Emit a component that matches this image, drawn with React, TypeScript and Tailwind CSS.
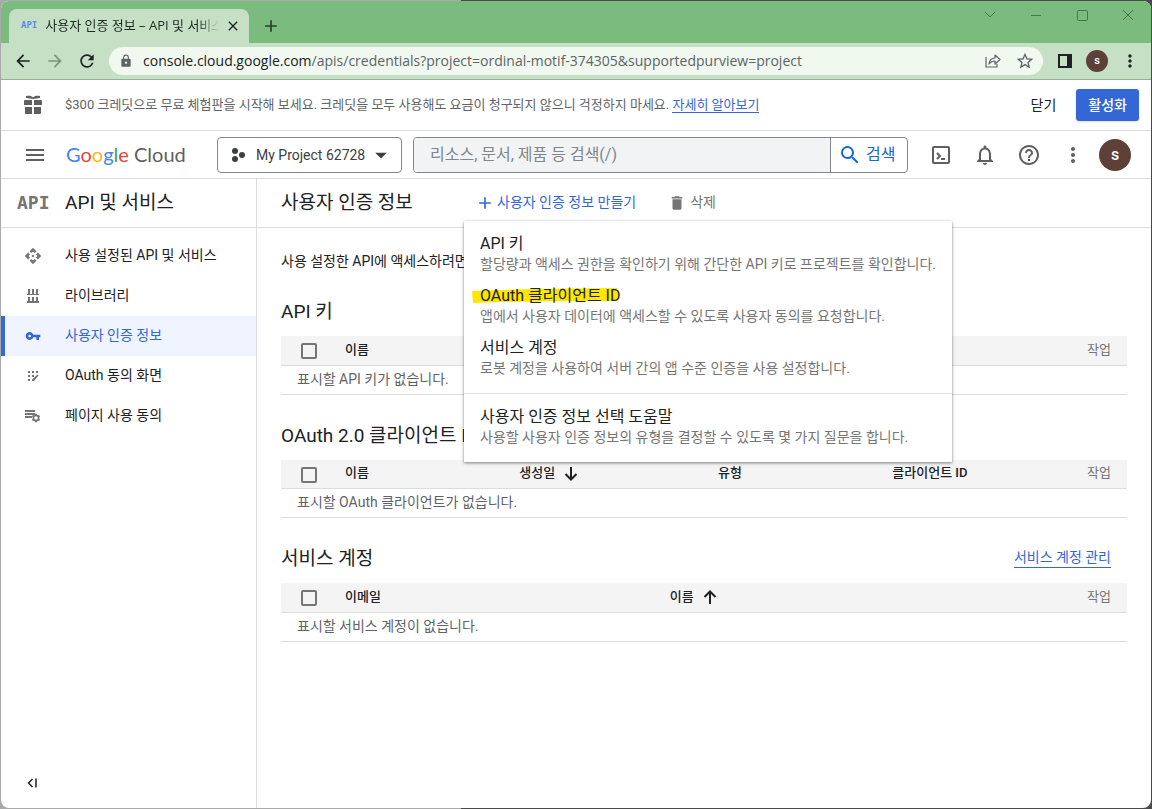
import { useState } from 'react';
import type { ReactNode } from 'react';
import {
  MdAdd,
  MdApi,
  MdArrowBack,
  MdArrowDropDown,
  MdArrowForward,
  MdClose,
  MdDelete,
  MdHelpOutline,
  MdLock,
  MdMenu,
  MdMoreVert,
  MdNotificationsNone,
  MdRefresh,
  MdSearch,
  MdStarBorder,
  MdVpnKey,
} from 'react-icons/md';

const menuItems = [
  { title: 'API 키', description: '할당량과 액세스 권한을 확인하기 위해 간단한 API 키로 프로젝트를 확인합니다.' },
  {
    title: 'OAuth 클라이언트 ID',
    description: '앱에서 사용자 데이터에 액세스할 수 있도록 사용자 동의를 요청합니다.',
    highlighted: true,
  },
  { title: '서비스 계정', description: '로봇 계정을 사용하여 서버 간의 앱 수준 인증을 사용 설정합니다.' },
];

const helpItem = {
  title: '사용자 인증 정보 선택 도움말',
  description: '사용할 사용자 인증 정보의 유형을 결정할 수 있도록 몇 가지 질문을 합니다.',
};

const navItems = [
  { label: '사용 설정된 API 및 서비스', icon: <MdApi className="size-[18px]" /> },
  { label: '라이브러리', icon: <LibraryIcon /> },
  { label: '사용자 인증 정보', icon: <MdVpnKey className="size-4" />, active: true },
  { label: 'OAuth 동의 화면', icon: <ConsentIcon /> },
  { label: '페이지 사용 동의', icon: <AgreementIcon /> },
];

const windowControls = [
  { label: '탭 검색', path: 'M6 8l5 5 5-5' },
  { label: '최소화', path: 'M6 11.5h10' },
  { label: '최대화', path: 'M7.5 6.5h8a1 1 0 0 1 1 1v8a1 1 0 0 1-1 1h-8a1 1 0 0 1-1-1v-8a1 1 0 0 1 1-1z' },
  { label: '창 닫기', path: 'M6 6l10 10M16 6L6 16' },
];

function LibraryIcon() {
  return (
    <svg viewBox="0 0 14 16" className="h-4 w-3.5" fill="currentColor">
      <path d="M2 1h2v5h2V1h2v5h2V1h2v5h1v1H1V6h1zM2 9h2v4h2V9h2v4h2V9h2v4h1v2H1v-2h1z" />
    </svg>
  );
}

function ConsentIcon() {
  return (
    <svg viewBox="0 0 12 12" className="size-3" fill="currentColor">
      <path d="M1 1h2v2H1zM5 1h2v2H5zM9 1h2v2H9zM1 5h2v2H1zM5 5h2v2H5zM1 9h2v2H1z" />
      <path d="M5 9.5l5.5-5 1 1L7 11H5z" />
    </svg>
  );
}

function AgreementIcon() {
  return (
    <svg viewBox="0 0 16 14" className="h-3.5 w-4" fill="currentColor">
      <path d="M0 1h10v2H0zM0 4h10v2H0zM0 7h7v2H0z" />
      <circle cx="11" cy="9" r="2.6" fill="none" stroke="currentColor" strokeWidth="1.6" />
      <path d="M10 4.8h2v1.6h-2zM10 11.6h2v1.6h-2zM6.9 7.6l.9-1.6 1.4.8-.9 1.5zM14.2 6l.9 1.6-1.4.8-.9-1.6zM6.9 10.4l1.4-.8.9 1.6-1.4.8zM15.1 10.4l-.9 1.6-1.4-.8.9-1.6z" />
    </svg>
  );
}

function SortArrow({ up }: { up?: boolean }) {
  return (
    <svg viewBox="0 0 18 18" className="size-[18px]" fill="none" stroke="currentColor" strokeWidth="2">
      <path d={up ? 'M9 16V4M3.500 9L9 3.500 14.500 9' : 'M9 2v12M3.500 9L9 14.500 14.500 9'} />
    </svg>
  );
}

function BrowserChrome() {
  return (
    <div className="font-['Open_Sans','Noto_Sans_CJK_KR',sans-serif]">
      <div className="flex h-[42px] items-start justify-between bg-[#7bbb7e]">
        <div className="flex items-center pt-2 pl-2">
          <div className="flex h-[34px] w-60 items-center rounded-t-lg bg-[#c5e0c5] pr-2 pl-3">
            <span className="font-['DejaVu_Sans_Mono',monospace] text-[9px] font-bold text-[#5f8ae8]">API</span>
            <span className="ml-2 flex-1 overflow-hidden [mask-image:linear-gradient(to_right,black_88%,transparent)] text-[13px] whitespace-nowrap text-[#1f2a20]">
              사용자 인증 정보 – API 및 서비스
            </span>
            <button aria-label="탭 닫기" className="ml-1.5">
              <MdClose className="size-4 text-[#202124]" />
            </button>
          </div>
          <button aria-label="새 탭" className="ml-3">
            <MdAdd className="size-5 text-[#26402a]" />
          </button>
        </div>
        <div className="flex items-center gap-6 pt-[3px] pr-3 text-[#4c724d]">
          {windowControls.map((control) => (
            <button key={control.label} aria-label={control.label}>
              <svg viewBox="0 0 22 22" className="size-[22px]" fill="none" stroke="currentColor">
                <path d={control.path} />
              </svg>
            </button>
          ))}
        </div>
      </div>

      <div className="flex h-[37px] items-center border-b border-[#94b096] bg-[#c5e0c5] text-[#202124]">
        <button aria-label="뒤로" className="ml-3">
          <MdArrowBack className="size-5" />
        </button>
        <button aria-label="앞으로" className="ml-3 text-[#7d937e]">
          <MdArrowForward className="size-5" />
        </button>
        <button aria-label="새로고침" className="ml-3">
          <MdRefresh className="size-5" />
        </button>
        <div className="ml-3 flex h-7 min-w-0 flex-1 items-center rounded-full bg-[#f0f8f0] px-2 text-[#5f6368]">
          <MdLock className="ml-0.5 size-3.5 shrink-0" />
          <div className="ml-2.5 flex-1 truncate text-sm">
            <span className="text-[#202124]">console.cloud.google.com</span>
            /apis/credentials?project=ordinal-motif-374305&amp;supportedpurview=project
          </div>
          <button aria-label="공유">
            <svg viewBox="0 0 16 16" className="size-4" fill="none" stroke="currentColor" strokeWidth="1.2">
              <path d="M1 4v10h11v-3" />
              <path d="M4 11c.3-4 2.5-5.8 6-6V2l5 4.5-5 4.5V8c-2.5 0-4.5 1-6 3z" strokeLinejoin="round" />
            </svg>
          </button>
          <button aria-label="북마크" className="ml-3.5">
            <MdStarBorder className="size-5" />
          </button>
        </div>
        <button aria-label="측면 패널" className="ml-[15px]">
          <svg viewBox="0 0 14 14" className="size-3.5">
            <path d="M1 1h12v12H1z" fill="none" stroke="currentColor" strokeWidth="2" />
            <path d="M9 1h4v12H9z" fill="currentColor" />
          </svg>
        </button>
        <button className="ml-3.5 size-[22px] rounded-full bg-[#5d4037] font-['Roboto',sans-serif] text-[11px] font-medium text-white">
          s
        </button>
        <button aria-label="Chrome 메뉴" className="mr-[11px] ml-3">
          <MdMoreVert className="size-5" />
        </button>
      </div>
    </div>
  );
}

function PromoBar() {
  return (
    <div className="flex min-h-[51px] items-center border-b border-[#dadce0] pr-3 pl-[22px] text-[13px]">
      <svg viewBox="0 0 20 20" className="size-5 shrink-0 text-[#5f5f5f]" fill="currentColor">
        <path d="M2 5h7v5H1V6a1 1 0 0 1 1-1zM11 5h7a1 1 0 0 1 1 1v4h-8zM2 12h7v7H3a1 1 0 0 1-1-1zM11 12h7v6a1 1 0 0 1-1 1h-6z" />
        <path d="M10 4L3 3V1c3-.6 5.6-.2 7 1.4C11.4.8 14 .4 17 1v2z" />
      </svg>
      <p className="ml-[22px] flex-1 text-[#5f6368]">
        $300 크레딧으로 무료 체험판을 시작해 보세요. 크레딧을 모두 사용해도 요금이 청구되지 않으니 걱정하지 마세요.{' '}
        <a href="#learn" className="border-b border-[#3367d6] text-[#3367d6]">
          자세히 알아보기
        </a>
      </p>
      <button className="mr-5 text-sm text-[#202124]">닫기</button>
      <button className="h-8 rounded-[3px] bg-[#3367d6] px-3 text-sm font-medium text-white shadow">활성화</button>
    </div>
  );
}

function Header() {
  return (
    <header className="flex min-h-12 items-center border-b border-[#dadce0] pr-5 pl-[22px] text-[#5f5f5f]">
      <button aria-label="탐색 메뉴">
        <MdMenu className="size-6" />
      </button>
      <a href="#home" className="ml-[19px] w-[151px] pb-0.5 font-['Lato',sans-serif] text-xl leading-6 whitespace-nowrap">
        <span className="text-[#4285f4]">G</span>
        <span className="text-[#ea4335]">o</span>
        <span className="text-[#fbbc04]">o</span>
        <span className="text-[#4285f4]">g</span>
        <span className="text-[#34a853]">l</span>
        <span className="text-[#ea4335]">e</span> Cloud
      </a>
      <button className="flex h-9 w-[185px] items-center rounded border border-[#80868b] pl-3 text-sm text-[#3c4043]">
        <svg viewBox="0 0 16 16" className="size-4" fill="currentColor">
          <circle cx="5" cy="4" r="3" />
          <circle cx="5" cy="12" r="3" />
          <circle cx="12" cy="8" r="3" />
        </svg>
        <span className="ml-2.5">My Project 62728</span>
        <MdArrowDropDown className="ml-0.5 size-7" />
      </button>
      <form className="ml-[11px] flex h-9 flex-1 overflow-hidden rounded border border-[#80868b]">
        <input
          type="search"
          aria-label="검색"
          placeholder="리소스, 문서, 제품 등 검색(/)"
          className="min-w-0 flex-1 bg-[#f1f3f4] pl-4 text-base outline-none placeholder:text-[#80868b]"
        />
        <button type="button" className="flex w-[77px] items-center gap-1 border-l border-[#80868b] pl-[7px] text-base text-[#1967d2]">
          <MdSearch className="size-6" />
          검색
        </button>
      </form>
      <div className="ml-[21px] flex items-center gap-5">
        <button aria-label="Cloud Shell">
          <svg viewBox="0 0 24 24" className="size-6" fill="none" stroke="currentColor" strokeWidth="2">
            <rect x="4" y="4" width="16" height="16" rx="1" />
            <path d="M8 10l3 3-3 3M12 16h4" />
          </svg>
        </button>
        <button aria-label="알림">
          <MdNotificationsNone className="size-6" />
        </button>
        <button aria-label="도움말">
          <MdHelpOutline className="size-6" />
        </button>
        <button aria-label="설정">
          <MdMoreVert className="size-6" />
        </button>
      </div>
      <button className="ml-3.5 size-8 rounded-full bg-[#5d4037] text-base font-medium text-white">s</button>
    </header>
  );
}

function Sidebar() {
  return (
    <aside className="flex w-64 shrink-0 flex-col border-r border-[#dadce0]">
      <div className="flex h-[49px] items-center border-b border-[#dadce0] pl-4">
        <span className="w-12 font-['DejaVu_Sans_Mono',monospace] text-lg font-bold text-[#757575]">API</span>
        <h2 className="text-[19px] text-[#202124]">API 및 서비스</h2>
      </div>
      <nav className="flex-1 pt-2">
        {navItems.map((item) => (
          <a
            key={item.label}
            href="#nav"
            className={`flex h-10 items-center border-l-4 text-sm ${
              item.active ? 'border-[#3367d6] bg-[#f0f4fe] text-[#3367d6]' : 'border-transparent text-[#202124]'
            }`}
          >
            <span className={`flex w-14 justify-center ${item.active ? '' : 'text-[#757575]'}`}>{item.icon}</span>
            <span className="ml-1 pb-0.5">{item.label}</span>
          </a>
        ))}
      </nav>
      <button aria-label="탐색 메뉴 접기" className="mb-[19px] ml-[25px] self-start text-[#202124]">
        <svg viewBox="0 0 12 12" className="size-3" fill="none" stroke="currentColor" strokeWidth="1.5">
          <path d="M6.5 2l-4 4 4 4M10 1.5v9" />
        </svg>
      </button>
    </aside>
  );
}

interface MenuItemProps {
  title: string;
  description: string;
  highlighted?: boolean;
}

function MenuItem({ title, description, highlighted }: MenuItemProps) {
  return (
    <button role="menuitem" className="relative block w-full px-4 py-1.5 text-left whitespace-nowrap">
      {highlighted && (
        <svg viewBox="0 0 146 16" className="absolute top-2 left-2 h-4 w-[146px]">
          <path d="M0 3L60 1l85-1 .8 6-1 7-60 .3L30 14 1 15z" fill="#ffe600" />
        </svg>
      )}
      <span className="relative block text-base leading-5 text-[#212121]">{title}</span>
      <span className="block text-sm leading-5 text-[#757575]">{description}</span>
    </button>
  );
}

function PageHeader() {
  const [open, setOpen] = useState(true);

  return (
    <div className="flex h-[49px] items-center border-b border-[#dadce0] pl-6 text-sm">
      <h1 className="w-[183px] text-[19px] text-[#202124]">사용자 인증 정보</h1>
      <div className="relative">
        <button
          aria-haspopup="menu"
          aria-expanded={open}
          onClick={() => setOpen(!open)}
          className="flex items-center gap-0.5 pl-[11px] text-[#3367d6]"
        >
          <MdAdd className="size-5" />
          <span className="pb-0.5">사용자 인증 정보 만들기</span>
        </button>
        {open && (
          <div
            role="menu"
            className="absolute top-[29px] left-0 z-10 w-[488px] bg-white pt-[7px] pb-[9px] shadow-[0_1px_3px_rgba(0,0,0,0.5)]"
          >
            {menuItems.map((item) => (
              <MenuItem key={item.title} {...item} />
            ))}
            <hr className="mt-[9px] mb-[7px] border-[#e0e0e0]" />
            <MenuItem {...helpItem} />
          </div>
        )}
      </div>
      <button disabled className="ml-8 flex items-center gap-1 text-[#757575]">
        <MdDelete className="size-[18px]" />
        <span className="pb-0.5">삭제</span>
      </button>
    </div>
  );
}

interface Column {
  label: string;
  width: string;
  sort?: ReactNode;
}

interface CredentialSectionProps {
  title: string;
  columns: Column[];
  empty: string;
  action?: ReactNode;
}

function CredentialSection({ title, columns, empty, action }: CredentialSectionProps) {
  return (
    <section className="pt-[27px]">
      <div className="flex h-[38px] items-start justify-between pr-4">
        <h2 className="text-[19px] leading-7 text-[#202124]">{title}</h2>
        {action}
      </div>
      <table className="w-full table-fixed text-left text-sm text-[#202124]">
        <thead>
          <tr className="h-[29px] border-b border-[#dadce0] bg-[#f4f4f4]">
            <th className="w-14 pt-0.5 pl-5">
              <input
                type="checkbox"
                aria-label={`${title} 모두 선택`}
                className="block size-4 appearance-none rounded-xs border-2 border-[#757575]"
              />
            </th>
            {columns.map((column) => (
              <th key={column.label} className={`px-2 text-[13px] font-medium ${column.width}`}>
                <span className="flex items-center gap-[7px]">
                  {column.label}
                  {column.sort}
                </span>
              </th>
            ))}
            <th className="pr-4 text-right text-[13px] font-normal text-[#757575]">작업</th>
          </tr>
        </thead>
        <tbody>
          <tr className="h-[29px] border-b border-[#dadce0]">
            <td colSpan={columns.length + 2} className="pb-0.5 pl-4 text-[#5f6368]">
              {empty}
            </td>
          </tr>
        </tbody>
      </table>
    </section>
  );
}

export default function App() {
  return (
    <div className="min-h-screen bg-linear-to-r from-[#a9a9a9] from-40% to-[#4a4a4a] to-40% p-px font-['Roboto','Noto_Sans_CJK_KR',sans-serif]">
      <div className="flex min-h-[calc(100vh-2px)] flex-col overflow-hidden rounded-lg bg-white">
        <BrowserChrome />
        <PromoBar />
        <Header />
        <div className="flex flex-1">
          <Sidebar />
          <div className="min-w-0 flex-1">
            <PageHeader />
            <main className="px-6">
              <p className="pt-[23px] text-sm whitespace-nowrap text-[#202124]">사용 설정한 API에 액세스하려면</p>
              <CredentialSection
                title="API 키"
                empty="표시할 API 키가 없습니다."
                columns={[{ label: '이름', width: 'w-[20.6%]' }]}
              />
              <CredentialSection
                title="OAuth 2.0 클라이언트 ID"
                empty="표시할 OAuth 클라이언트가 없습니다."
                columns={[
                  { label: '이름', width: 'w-[20.6%]' },
                  { label: '생성일', width: 'w-[23.5%]', sort: <SortArrow /> },
                  { label: '유형', width: 'w-[20.6%]' },
                  { label: '클라이언트 ID', width: 'w-[20%]' },
                ]}
              />
              <CredentialSection
                title="서비스 계정"
                empty="표시할 서비스 계정이 없습니다."
                action={
                  <a href="#manage" className="mt-0.5 border-b border-[#3367d6] text-sm text-[#3367d6]">
                    서비스 계정 관리
                  </a>
                }
                columns={[
                  { label: '이메일', width: 'w-[38.4%]' },
                  { label: '이름', width: 'w-[30%]', sort: <SortArrow up /> },
                ]}
              />
            </main>
          </div>
        </div>
      </div>
    </div>
  );
}
